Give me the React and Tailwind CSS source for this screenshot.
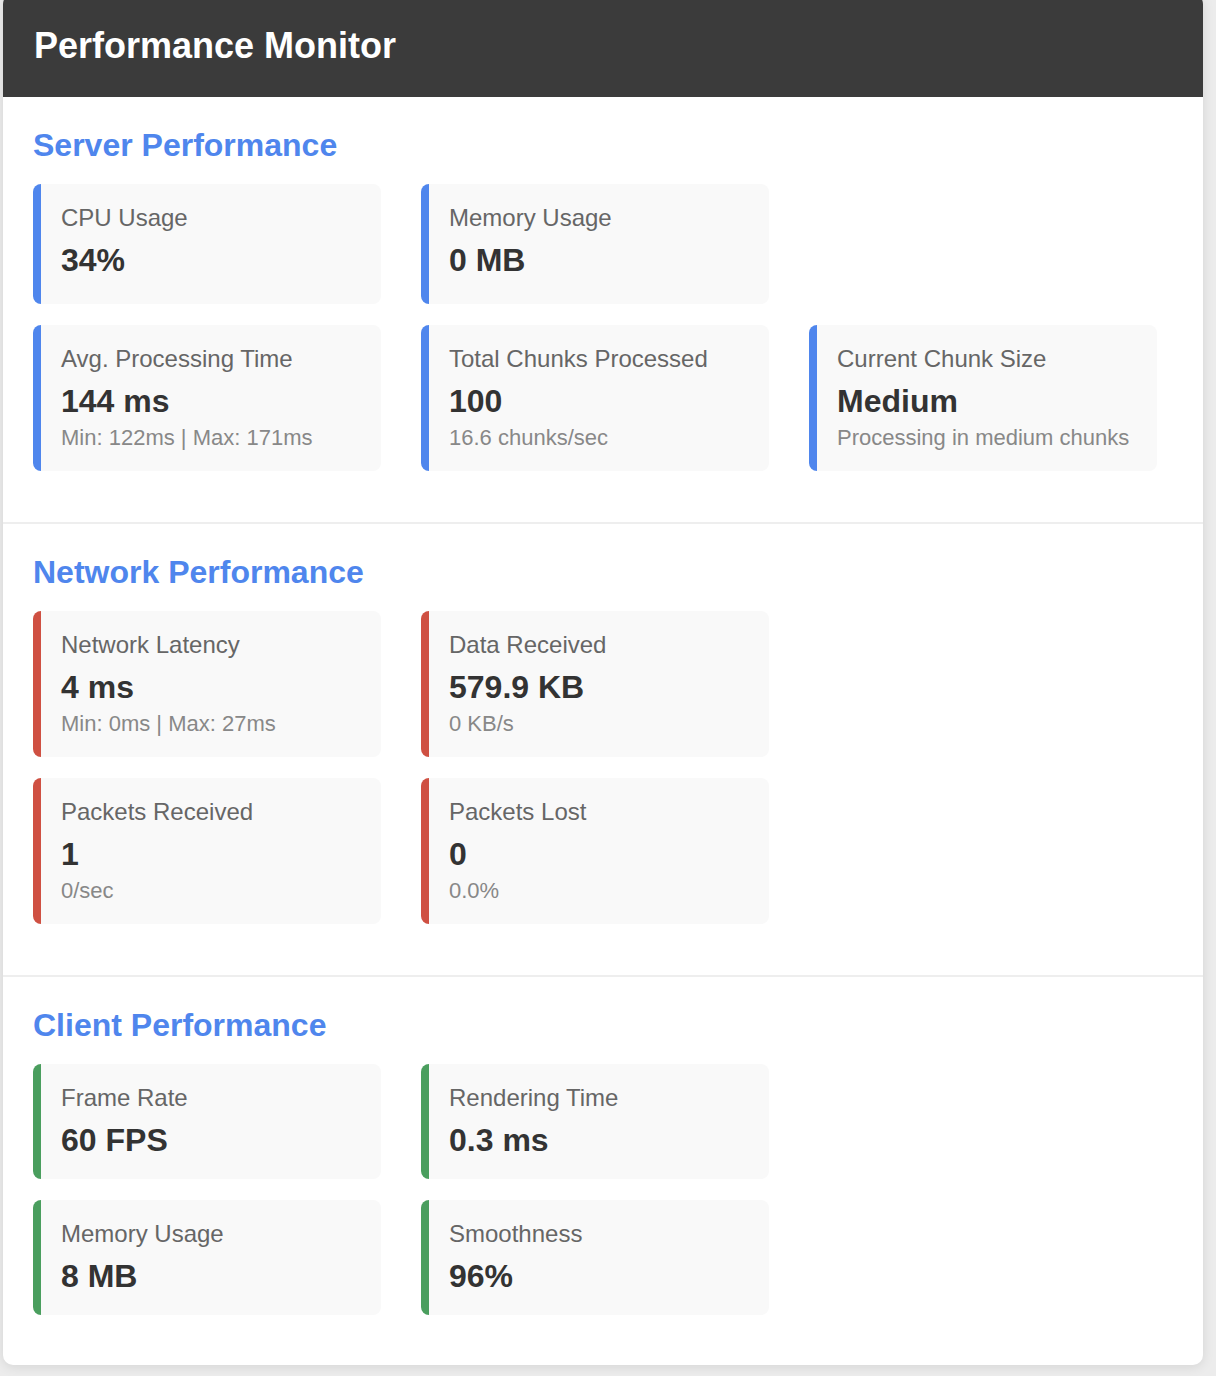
const sections = [
  {
    title: "Server Performance",
    bar: "border-[#4f86ed]",
    rows: [
      [
        { label: "CPU Usage", value: "34%", sub: "" },
        { label: "Memory Usage", value: "0 MB", sub: "" },
      ],
      [
        { label: "Avg. Processing Time", value: "144 ms", sub: "Min: 122ms | Max: 171ms" },
        { label: "Total Chunks Processed", value: "100", sub: "16.6 chunks/sec" },
        { label: "Current Chunk Size", value: "Medium", sub: "Processing in medium chunks" },
      ],
    ],
  },
  {
    title: "Network Performance",
    bar: "border-[#cf5042]",
    rows: [
      [
        { label: "Network Latency", value: "4 ms", sub: "Min: 0ms | Max: 27ms" },
        { label: "Data Received", value: "579.9 KB", sub: "0 KB/s" },
      ],
      [
        { label: "Packets Received", value: "1", sub: "0/sec" },
        { label: "Packets Lost", value: "0", sub: "0.0%" },
      ],
    ],
  },
  {
    title: "Client Performance",
    bar: "border-[#4a9e5e]",
    rows: [
      [
        { label: "Frame Rate", value: "60 FPS" },
        { label: "Rendering Time", value: "0.3 ms" },
      ],
      [
        { label: "Memory Usage", value: "8 MB" },
        { label: "Smoothness", value: "96%" },
      ],
    ],
  },
];

function MetricCard({ metric, bar }) {
  return (
    <div className={`rounded-lg border-l-8 ${bar} bg-[#f9f9f9] px-5 py-5`}>
      <div className="mb-[10px] text-[24px] leading-[28px] text-[#666]">{metric.label}</div>
      <div className="text-[32px] font-bold leading-[37px] text-[#333]">{metric.value}</div>
      {metric.sub !== undefined ? (
        <div className="mt-[5px] text-[22px] leading-[26px] text-[#888]">{metric.sub}</div>
      ) : null}
    </div>
  );
}

function Section({ section, last }) {
  return (
    <section className={`px-[30px] pt-[30px] ${last ? "pb-[50px]" : "border-b-2 border-[#eeeeee] pb-[51px]"}`}>
      <h2 className="mb-5 text-[32px] font-bold leading-[37px] text-[#4f86ed]">{section.title}</h2>
      <div className="flex flex-col gap-[21px]">
        {section.rows.map((row, i) => (
          <div key={i} className="grid grid-cols-[repeat(3,348px)] gap-x-10">
            {row.map((m) => (
              <MetricCard key={m.label} metric={m} bar={section.bar} />
            ))}
          </div>
        ))}
      </div>
    </section>
  );
}

export default function App() {
  return (
    <div className="min-h-[1376px] overflow-hidden bg-[#ececec] font-['Liberation_Sans',Arial,Helvetica,sans-serif]">
      <div className="-mt-[6px] ml-[3px] w-[1200px] overflow-hidden rounded-[10px] bg-white shadow-[0_2px_12px_rgba(0,0,0,0.1)]">
        <header className="bg-[#3b3b3b] px-[31px] pt-[31px] pb-[31px]">
          <h1 className="text-[36px] font-bold leading-[41px] text-white">Performance Monitor</h1>
        </header>
        {sections.map((s, i) => (
          <Section key={s.title} section={s} last={i === sections.length - 1} />
        ))}
      </div>
    </div>
  );
}
